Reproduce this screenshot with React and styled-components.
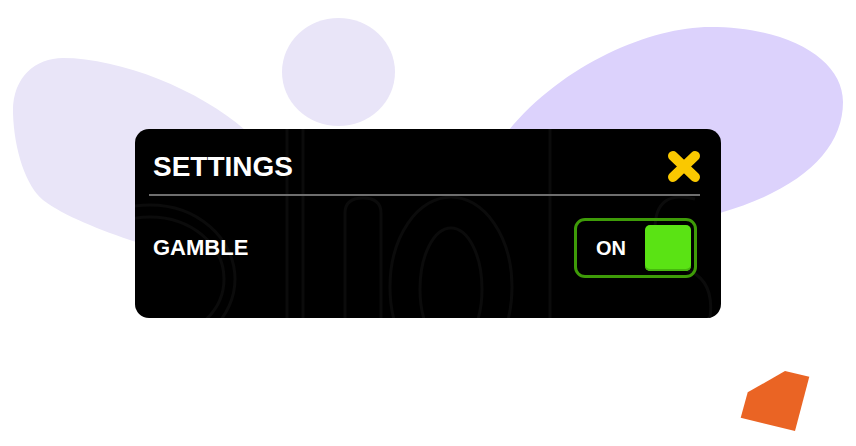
import React, { useState } from 'react'
import styled, { createGlobalStyle } from 'styled-components'

const GlobalStyle = createGlobalStyle`
  html, body {
    margin: 0;
    background: #ffffff;
  }
  body {
    font-family: "Liberation Sans", Arial, sans-serif;
  }
`

function Backdrop() {
  return (
    <BackdropSvg width="856" height="446" viewBox="0 0 856 446">
      <path
        d="M13,113 C12,78 35,58 63,58 C120,58 200,90 245,130 L250,260 L160,260 L136,242 C100,230 64,216 43,200 C26,186 14,150 13,113 Z"
        fill="#e9e5f8"
      />
      <ellipse cx="338.5" cy="72" rx="56.5" ry="54" fill="#e9e5f8" />
      <path
        d="M505,135 C560,65 650,27 710,27 C790,27 843,60 843,102 C843,150 800,190 720,213 L600,250 Z"
        fill="#dcd2fc"
      />
      <polygon points="747.7,392.3 785,371 809.3,376.7 795,431 740.7,417.7" fill="#ea6424" />
    </BackdropSvg>
  )
}

function CardArt() {
  return (
    <ArtSvg width="586" height="189" viewBox="0 0 586 189">
      <g fill="none" stroke="#0b0b0b" strokeWidth="3">
        <ellipse cx="15" cy="150" rx="85" ry="74" />
        <ellipse cx="15" cy="150" rx="74" ry="62" />
        <line x1="152" y1="0" x2="152" y2="189" />
        <line x1="168" y1="0" x2="168" y2="189" />
        <path d="M210,189 L210,84 Q210,69 228,69 Q246,69 246,84 L246,189" />
        <ellipse cx="316" cy="158" rx="61" ry="90" />
        <ellipse cx="316" cy="160" rx="31" ry="61" />
        <line x1="415" y1="0" x2="415" y2="189" />
        <path d="M560,70 Q520,60 520,100 Q520,130 550,140 Q580,150 575,189" />
      </g>
    </ArtSvg>
  )
}

function CloseIcon() {
  return (
    <svg width="34" height="33" viewBox="0 0 34 33">
      <g stroke="#fac800" strokeWidth="10" strokeLinecap="round">
        <line x1="6" y1="6" x2="28" y2="27" />
        <line x1="28" y1="6" x2="6" y2="27" />
      </g>
    </svg>
  )
}

function App() {
  const [gamble, setGamble] = useState(true)

  return (
    <>
      <GlobalStyle />
      <Page>
        <Backdrop />
        <Card>
          <CardArt />
          <Header>
            <Title>SETTINGS</Title>
            <CloseButton aria-label="close">
              <CloseIcon />
            </CloseButton>
          </Header>
          <Row>
            <Label>GAMBLE</Label>
            <Toggle on={gamble ? 1 : 0} onClick={() => setGamble(!gamble)}>
              <ToggleText>{gamble ? 'ON' : 'OFF'}</ToggleText>
              <Knob />
            </Toggle>
          </Row>
        </Card>
      </Page>
    </>
  )
}

export default App

const Page = styled.div`
  position: relative;
  width: 856px;
  height: 446px;
  overflow: hidden;
  padding: 129px 0 0 135px;
  box-sizing: border-box;
`

const BackdropSvg = styled.svg`
  position: absolute;
  top: 0;
  left: 0;
`

const ArtSvg = styled.svg`
  position: absolute;
  top: 0;
  left: 0;
`

const Card = styled.div`
  position: relative;
  width: 586px;
  height: 189px;
  box-sizing: border-box;
  padding: 0 21px 0 14px;
  background: #000;
  border-radius: 14px;
  overflow: hidden;
`

const Header = styled.div`
  position: relative;
  display: flex;
  align-items: center;
  justify-content: space-between;
  height: 67px;
  box-sizing: border-box;
  padding-top: 10px;
  border-bottom: 2px solid #6e6e6e;
`

const Title = styled.div`
  padding-left: 4px;
  color: #fff;
  font-size: 28px;
  font-weight: 700;
`

const CloseButton = styled.div`
  display: flex;
  margin-right: -1px;
  cursor: pointer;
`

const Row = styled.div`
  position: relative;
  display: flex;
  align-items: center;
  justify-content: space-between;
  padding-top: 22px;
`

const Label = styled.div`
  padding-left: 4px;
  color: #fff;
  font-size: 22px;
  font-weight: 700;
`

const Toggle = styled.div`
  display: flex;
  align-items: center;
  justify-content: space-between;
  width: 123px;
  height: 60px;
  box-sizing: border-box;
  margin-right: 3px;
  padding: 0 3px 0 19px;
  border: 3px solid ${props => (props.on ? '#3e9b08' : '#555')};
  border-radius: 11px;
  cursor: pointer;
`

const ToggleText = styled.span`
  color: #fff;
  font-size: 20px;
  font-weight: 700;
`

const Knob = styled.div`
  width: 46px;
  height: 46px;
  background: #5ae314;
  border-radius: 5px;
  box-shadow: inset 0 -2px 0 #46b80e;
`
